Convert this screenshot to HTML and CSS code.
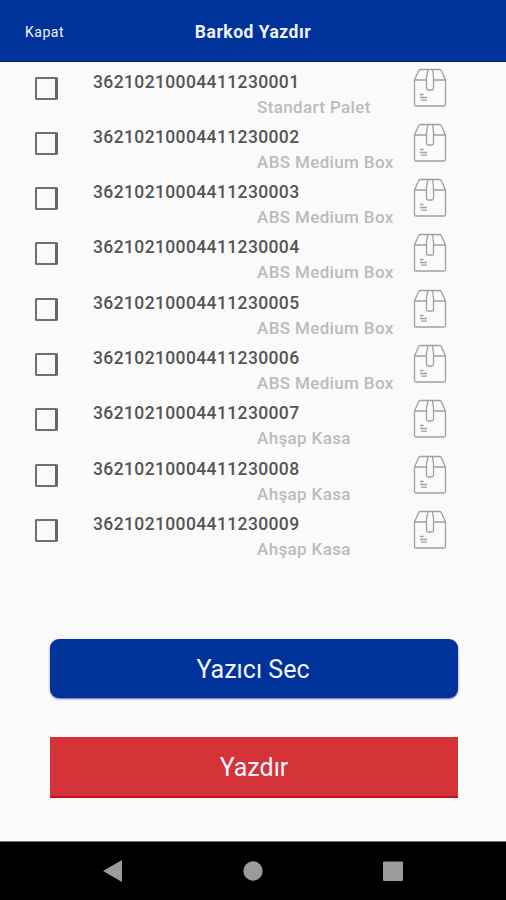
FILE: index.html
```html
<!DOCTYPE html>
<html lang="tr">
<head>
<meta charset="utf-8">
<title>Barkod Yazdır</title>
<link rel="stylesheet" href="styles.css">
</head>
<body>
<svg width="0" height="0" class="defs">
  <symbol id="box" viewBox="0 0 34 40">
    <path d="M1.500 12 5.500 3Q6.200 1.500 7.500 1.500H26.500Q27.800 1.500 28.500 3L32.500 12V36.500Q32.500 38 31 38H3Q1.500 38 1.500 36.500ZM1.500 12H13.500M20.500 12H32.500M15 1.500 13.500 9V20.500Q13.500 22 15 22H19Q20.500 22 20.500 20.500V9L19.500 1.500"/>
    <path d="M7 26.500H10.500M7 29.500H14M8 32.200H14"/>
  </symbol>
</svg>
<header class="bar"><span class="close">Kapat</span><h1>Barkod Yazdır</h1></header>
<main>
  <ul class="list">
    <li><i class="check"></i><div class="info"><b>36210210004411230001</b><span>Standart Palet</span></div><svg class="box"><use href="#box"/></svg></li>
    <li><i class="check"></i><div class="info"><b>36210210004411230002</b><span>ABS Medium Box</span></div><svg class="box"><use href="#box"/></svg></li>
    <li><i class="check"></i><div class="info"><b>36210210004411230003</b><span>ABS Medium Box</span></div><svg class="box"><use href="#box"/></svg></li>
    <li><i class="check"></i><div class="info"><b>36210210004411230004</b><span>ABS Medium Box</span></div><svg class="box"><use href="#box"/></svg></li>
    <li><i class="check"></i><div class="info"><b>36210210004411230005</b><span>ABS Medium Box</span></div><svg class="box"><use href="#box"/></svg></li>
    <li><i class="check"></i><div class="info"><b>36210210004411230006</b><span>ABS Medium Box</span></div><svg class="box"><use href="#box"/></svg></li>
    <li><i class="check"></i><div class="info"><b>36210210004411230007</b><span>Ahşap Kasa</span></div><svg class="box"><use href="#box"/></svg></li>
    <li><i class="check"></i><div class="info"><b>36210210004411230008</b><span>Ahşap Kasa</span></div><svg class="box"><use href="#box"/></svg></li>
    <li><i class="check"></i><div class="info"><b>36210210004411230009</b><span>Ahşap Kasa</span></div><svg class="box"><use href="#box"/></svg></li>
  </ul>
  <div class="actions">
    <button class="choose">Yazıcı Sec</button>
    <button class="print">Yazdır</button>
  </div>
</main>
<nav>
  <svg viewBox="0 0 22 24"><path d="M1 12 20 1V23Z"/></svg>
  <svg viewBox="0 0 22 24"><circle cx="11" cy="12" r="9.700"/></svg>
  <svg viewBox="0 0 22 24"><rect x="1" y="2.500" width="20" height="19.500" rx="1"/></svg>
</nav>
</body>
</html>
```
FILE: styles.css
```css
* { box-sizing: border-box; }
body {
  margin: 0;
  height: 900px;
  display: flex;
  flex-direction: column;
  background: #fafafa;
  font-family: Roboto, "Liberation Sans", sans-serif;
  overflow: hidden;
}
.defs { display: none; }
.bar {
  height: 62px;
  flex: none;
  display: grid;
  grid-template-columns: 1fr auto 1fr;
  align-items: center;
  padding: 3px 0 0;
  background: #003399;
  border-bottom: 1px solid #00208a;
  color: #f0f3ff;
}
.close { padding-left: 25px; font-size: 14px; letter-spacing: 0.500px; }
h1 { margin: 0; font-size: 17.500px; font-weight: 700; letter-spacing: 0.500px; }
main { flex: 1; display: flex; flex-direction: column; }
.list { margin: 0; padding: 3.500px 0 0; list-style: none; }
.list li { height: 55.300px; display: flex; align-items: flex-start; }
.check {
  width: 23px;
  height: 23px;
  margin: 11px 0 0 35px;
  border: 2px solid #707070;
  border-right: 3px solid #666;
  border-radius: 2px;
}
.info { width: 320px; margin-left: 35px; display: flex; flex-direction: column; }
.info b {
  height: 25px;
  padding-top: 4px;
  font-size: 17.500px;
  line-height: 24px;
  font-weight: 500;
  letter-spacing: 0.380px;
  color: #555;
}
.info span {
  padding: 4px 0 0 164px;
  font-size: 17px;
  line-height: 24px;
  font-weight: 500;
  letter-spacing: 0.360px;
  color: #bbb;
  white-space: nowrap;
}
.box {
  width: 34px;
  height: 40px;
  margin-top: 2px;
  fill: none;
  stroke: #a0a0a0;
  stroke-width: 1.300;
}
.actions {
  margin: 75.500px 48px 0 50px;
  display: flex;
  flex-direction: column;
  gap: 39px;
}
button {
  height: 59px;
  padding: 2px 0 0;
  border: 0;
  color: #f5f2ff;
  font: 400 25px Roboto, "Liberation Sans", sans-serif;
}
.choose { padding-right: 2px; background: #003399; border-radius: 9px; box-shadow: 0 1px 2px #6660a0; }
.print { height: 61px; background: #d43338; border-bottom: 2px solid #cc101c; }
nav {
  height: 59px;
  flex: none;
  display: flex;
  justify-content: space-between;
  padding: 17px 102px 0;
  background: #000;
  border-top: 1px solid #777;
}
nav svg { width: 22px; height: 24px; fill: #9b9b9b; }
```
